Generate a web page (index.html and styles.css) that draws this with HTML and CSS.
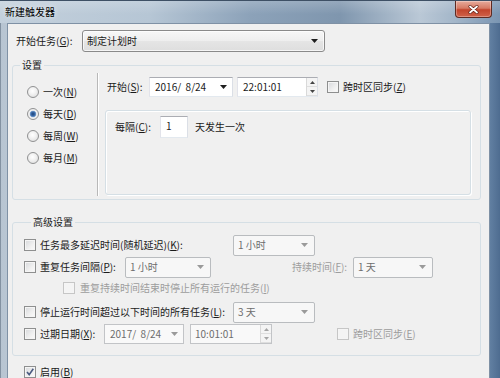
FILE: index.html
```html
<!DOCTYPE html>
<html lang="zh-CN">
<head>
<meta charset="utf-8">
<title>新建触发器</title>
<link rel="stylesheet" href="styles.css">
</head>
<body>
<div class="window">
  <div class="titlebar">
    <span class="title">新建触发器</span>
    <div class="close">
      <svg width="11" height="9" viewBox="0 0 11 9"><path d="M2 1.5L9 7.5M9 1.5L2 7.5" stroke="#5a1a10" stroke-width="3" stroke-linecap="round"/><path d="M2 1.5L9 7.5M9 1.5L2 7.5" stroke="#fff" stroke-width="1.8" stroke-linecap="round"/></svg>
    </div>
  </div>
  <div class="client">
    <div class="top-row">
      <span class="lbl lbl-task">开始任务(<u>G</u>):</span>
      <div class="combo combo-main"><span>制定计划时</span><svg class="arrow" width="7" height="4" viewBox="0 0 7 4"><path d="M0 0h7L3.5 4z"/></svg></div>
    </div>

    <fieldset class="group group-settings">
      <legend>设置</legend>
      <div class="settings-body">
        <div class="radios">
          <div class="opt"><span class="radio"></span><span>一次(<u>N</u>)</span></div>
          <div class="opt"><span class="radio on"></span><span>每天(<u>D</u>)</span></div>
          <div class="opt"><span class="radio"></span><span>每周(<u>W</u>)</span></div>
          <div class="opt"><span class="radio"></span><span>每月(<u>M</u>)</span></div>
        </div>
        <div class="vsep"></div>
        <div class="schedule">
          <div class="start-row">
            <span class="lbl lbl-start">开始(<u>S</u>):</span>
            <div class="field date"><span class="pre">2016/  8/24</span><svg class="arrow" width="7" height="4" viewBox="0 0 7 4"><path d="M0 0h7L3.5 4z"/></svg></div>
            <div class="field time"><span>22:01:01</span>
              <div class="spin"><span class="spin-btn"><svg width="5" height="3" viewBox="0 0 5 3"><path d="M0 3h5L2.5 0z"/></svg></span><span class="spin-btn"><svg width="5" height="3" viewBox="0 0 5 3"><path d="M0 0h5L2.5 3z"/></svg></span></div>
            </div>
            <span class="check sync-check"></span><span class="lbl after-check">跨时区同步(<u>Z</u>)</span>
          </div>
          <div class="recur">
            <div class="recur-row">
              <span class="lbl lbl-every">每隔(<u>C</u>):</span>
              <div class="field num">1</div>
              <span class="lbl unit">天发生一次</span>
            </div>
          </div>
        </div>
      </div>
    </fieldset>

    <fieldset class="group group-adv">
      <legend>高级设置</legend>
      <div class="adv-row">
        <span class="check"></span><span class="lbl after-check w193">任务最多延迟时间(随机延迟)(<u>K</u>):</span>
        <div class="combo disabled w82"><span>1 小时</span><svg class="arrow" width="7" height="4" viewBox="0 0 7 4"><path d="M0 0h7L3.5 4z"/></svg></div>
      </div>
      <div class="adv-row">
        <span class="check"></span><span class="lbl after-check w85">重复任务间隔(<u>P</u>):</span>
        <div class="combo disabled w86"><span>1 小时</span><svg class="arrow" width="7" height="4" viewBox="0 0 7 4"><path d="M0 0h7L3.5 4z"/></svg></div>
        <span class="lbl dim lbl-dur">持续时间(<u>F</u>):</span>
        <div class="combo disabled w80"><span>1 天</span><svg class="arrow" width="7" height="4" viewBox="0 0 7 4"><path d="M0 0h7L3.5 4z"/></svg></div>
      </div>
      <div class="adv-row short">
        <span class="check dis indent"></span><span class="lbl dim after-indent">重复持续时间结束时停止所有运行的任务(<u>I</u>)</span>
      </div>
      <div class="adv-row spaced">
        <span class="check"></span><span class="lbl after-check w193">停止运行时间超过以下时间的所有任务(<u>L</u>):</span>
        <div class="combo disabled w82"><span>3 天</span><svg class="arrow" width="7" height="4" viewBox="0 0 7 4"><path d="M0 0h7L3.5 4z"/></svg></div>
      </div>
      <div class="adv-row">
        <span class="check"></span><span class="lbl after-check w64">过期日期(<u>X</u>):</span>
        <div class="field disabled exp-date"><span class="pre">2017/  8/24</span><svg class="arrow" width="7" height="4" viewBox="0 0 7 4"><path d="M0 0h7L3.5 4z"/></svg></div>
        <div class="field disabled exp-time"><span>10:01:01</span>
          <div class="spin"><span class="spin-btn"><svg width="5" height="3" viewBox="0 0 5 3"><path d="M0 3h5L2.5 0z"/></svg></span><span class="spin-btn"><svg width="5" height="3" viewBox="0 0 5 3"><path d="M0 0h5L2.5 3z"/></svg></span></div>
        </div>
        <span class="check dis exp-sync"></span><span class="lbl dim after-check">跨时区同步(<u>E</u>)</span>
      </div>
    </fieldset>

    <div class="enable-row">
      <span class="check on"><svg width="10" height="10" viewBox="0 0 10 10"><path d="M2 5l2.2 2.6L8.3 1.8" fill="none" stroke="#4a5a80" stroke-width="1.6"/></svg></span><span class="lbl after-check">启用(<u>B</u>)</span>
    </div>
  </div>
</div>
</body>
</html>
```

FILE: styles.css
```css
* { box-sizing: border-box; }

body {
  margin: 0;
  width: 500px;
  height: 378px;
  overflow: hidden;
  font-family: "Noto Sans CJK SC", "Microsoft YaHei", sans-serif;
  font-size: 10px;
  line-height: 14px;
  color: #1a1a1a;
}

u { text-decoration: underline; text-underline-offset: 1px; }

.window {
  height: 378px;
  display: flex;
  flex-direction: column;
  background: linear-gradient(to right, #4f5f72 0, #b7c4d1 1px, #b9c6d3 7px, #97adc2 50%, #6b89aa 97%, #4e6c90 100%);
}

.titlebar {
  flex: none;
  height: 23px;
  display: flex;
  align-items: flex-start;
  border-top: 1px solid #3e5065;
  background:
    linear-gradient(rgba(255,255,255,0.18), rgba(255,255,255,0) 60%),
    linear-gradient(to right, #c3d0dc 0%, #b6c6d5 30%, #8ca2b9 50%, #7f96ae 68%, #bac8d6 84%, #a3b6c9 91%, #7a95b2 100%);
}

.title {
  margin: 4px 0 0 5px;
  color: #000;
  text-shadow: 0 0 5px rgba(255,255,255,0.9);
}

.close {
  margin-left: auto;
  margin-right: 8px;
  width: 37px;
  height: 17px;
  border: 1px solid #5e2a22;
  border-top: 0;
  border-radius: 0 0 4px 4px;
  background: linear-gradient(#e7ab9c 0%, #d67a64 45%, #c2442c 55%, #d0624a 100%);
  box-shadow: inset 0 0 0 1px rgba(255,255,255,0.3);
  display: flex;
  align-items: center;
  justify-content: center;
}

.client {
  flex: 1;
  margin: 0 10px 0 7px;
  background: #f0f0f0;
  border: 1px solid #7f91a5;
  border-bottom: 0;
}

.lbl { white-space: nowrap; flex: none; }
.pre { white-space: pre; }
.dim { color: #9d9d9d; }

.top-row {
  display: flex;
  align-items: center;
  height: 22px;
  margin-top: 6px;
  padding-left: 8px;
}
.lbl-task { width: 66px; }

.combo {
  flex: none;
  display: flex;
  align-items: center;
  justify-content: space-between;
  height: 22px;
  padding: 0 6px 0 4px;
  border: 1px solid #8a8a8a;
  border-radius: 3px;
  background: linear-gradient(#f7f7f7 0%, #eeeeee 50%, #e5e5e5 51%, #dedede 100%);
  box-shadow: inset 0 0 0 1px rgba(255,255,255,0.7);
}
.combo-main { width: 243px; }
.arrow { fill: #1e1e1e; flex: none; }

.combo.disabled {
  height: 21px;
  border-color: #b9bcbf;
  border-radius: 2px;
  background: #f7f7f7;
  box-shadow: none;
  color: #6d6d6d;
}
.combo.disabled .arrow, .field.disabled .arrow { fill: #9a9a9a; }
.w82 { width: 82px; }
.w86 { width: 86px; }
.w80 { width: 80px; }

.group {
  margin: 6px 0 0 4px;
  width: 469px;
  min-width: 0;
  padding: 0;
  border: 1px solid #d5dfe5;
  border-radius: 3px;
}
.group legend {
  margin-left: 7px;
  padding: 0 2px;
  line-height: 14px;
}

.settings-body {
  display: flex;
  height: 127px;
}

.radios {
  width: 84px;
  flex: none;
  padding: 9px 0 0 14px;
  display: flex;
  flex-direction: column;
}
.opt {
  height: 22px;
  display: flex;
  align-items: center;
  gap: 4px;
}
.radio {
  flex: none;
  width: 12px;
  height: 12px;
  border-radius: 50%;
  border: 1px solid #909192;
  background: radial-gradient(circle at 45% 40%, #ffffff 0, #f2f2f2 40%, #d8d8d8 100%);
}
.radio.on {
  background: radial-gradient(circle at 50% 50%, #1f4378 0, #3a6aa8 2px, #7aa0cf 3px, #eeeeee 3.6px, #f6f6f6 100%);
}

.vsep {
  flex: none;
  width: 2px;
  margin: 1px 0 3px;
  border-left: 1px solid #b8b8b8;
  border-right: 1px solid #ffffff;
}

.schedule {
  flex: 1;
  display: flex;
  flex-direction: column;
}
.start-row {
  display: flex;
  align-items: center;
  height: 20px;
  margin-top: 5px;
  padding-left: 8px;
}
.lbl-start { width: 42px; }

.field {
  flex: none;
  display: flex;
  align-items: center;
  height: 20px;
  padding-left: 4px;
  border: 1px solid #abadb3;
  border-color: #abadb3 #dbdfe6 #e3e9ef #e2e3ea;
  background: #ffffff;
}
.date { width: 84px; justify-content: space-between; padding-right: 5px; padding-left: 5px; }
.time { width: 81px; margin-left: 4px; padding-left: 5px; }

.spin {
  margin-left: auto;
  width: 11px;
  height: 100%;
  display: flex;
  flex-direction: column;
  border-left: 1px solid #d9d9d9;
}
.spin-btn {
  flex: 1;
  display: flex;
  align-items: center;
  justify-content: center;
  background: #f4f4f4;
  border-bottom: 1px solid #dedede;
}
.spin-btn svg { fill: #444; }
.field.disabled .spin-btn svg { fill: #a5a5a5; }

.check {
  flex: none;
  width: 12px;
  height: 12px;
  display: flex;
  align-items: center;
  justify-content: center;
  border: 1px solid #8e8f8f;
  background: linear-gradient(135deg, #d6d8db 0%, #f0f0f0 60%, #fbfbfb 100%);
  box-shadow: inset 0 0 0 1px #f5f5f5;
}
.check.dis {
  border-color: #c6c6c6;
  background: #f4f4f4;
}
.after-check { margin-left: 4px; }
.sync-check { margin-left: 9px; }

.recur {
  flex: 1;
  margin: 13px 9px 4px 6px;
  padding: 5px 0 0 9px;
  border: 1px solid #d5dfe5;
  border-radius: 3px;
  box-shadow: inset 1px 1px 0 #ffffff, 1px 1px 0 #ffffff;
}
.recur-row {
  display: flex;
  align-items: center;
  height: 22px;
}
.lbl-every { width: 45px; }
.num {
  width: 28px;
  height: 22px;
  align-items: flex-start;
  padding: 2px 0 0 5px;
}
.unit { margin-left: 7px; }

.group-adv {
  margin-top: 15px;
  padding: 5px 0 10px 11px;
}
.adv-row {
  display: flex;
  align-items: center;
  height: 22px;
}
.adv-row.short { height: 20px; }
.adv-row.spaced { margin-top: 3px; }
.w193 { width: 193px; }
.w85 { width: 85px; }
.w64 { width: 64px; }
.lbl-dur { margin-left: 81px; width: 61px; }
.indent { margin-left: 39px; }
.after-indent { margin-left: 5px; }

.field.disabled {
  height: 20px;
  border-color: #c2c4c7;
  background: #f9f9f9;
  color: #6d6d6d;
}
.exp-date { width: 80px; justify-content: space-between; padding: 0 5px; }
.exp-time { width: 82px; margin-left: 6px; padding-left: 4px; }
.exp-sync { margin-left: 65px; }

.enable-row {
  display: flex;
  align-items: center;
  height: 22px;
  margin-top: 5px;
  padding-left: 16px;
}
```
